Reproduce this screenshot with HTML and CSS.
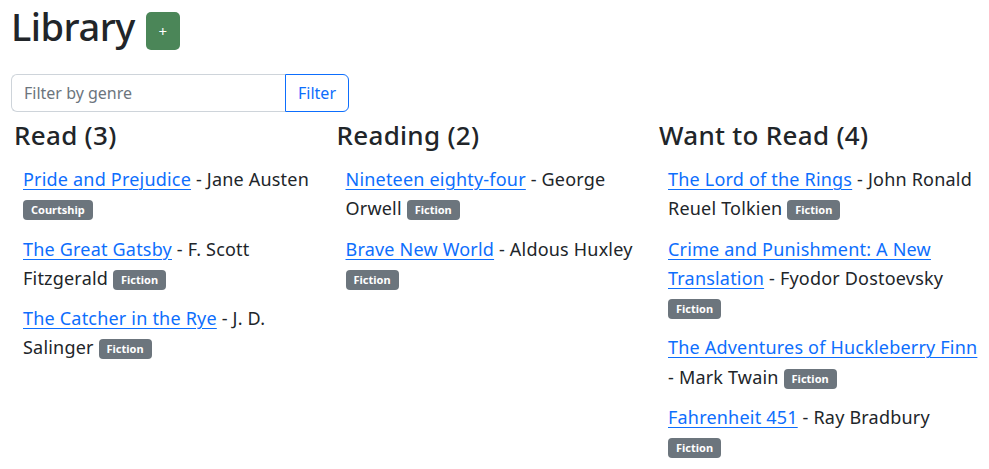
FILE: index.html
```html
<!DOCTYPE html>
<html lang="en">
<head>
<meta charset="utf-8">
<title>Library</title>
<link rel="stylesheet" href="styles.css">
</head>
<body>
<div class="page">
  <header class="header">
    <h1 class="title">Library</h1>
    <button class="btn-add" type="button">+</button>
  </header>
  <form class="filter">
    <input class="filter-input" type="text" placeholder="Filter by genre">
    <button class="filter-btn" type="button">Filter</button>
  </form>
  <div class="shelves">
    <section class="shelf">
      <h2 class="shelf-title">Read (3)</h2>
      <ul class="books">
        <li class="book"><a href="#">Pride and Prejudice</a> - Jane Austen <span class="badge">Courtship</span></li>
        <li class="book"><a href="#">The Great Gatsby</a> - F. Scott Fitzgerald <span class="badge">Fiction</span></li>
        <li class="book"><a href="#">The Catcher in the Rye</a> - J. D. Salinger <span class="badge">Fiction</span></li>
      </ul>
    </section>
    <section class="shelf">
      <h2 class="shelf-title">Reading (2)</h2>
      <ul class="books">
        <li class="book"><a href="#">Nineteen eighty-four</a> - George Orwell <span class="badge">Fiction</span></li>
        <li class="book"><a href="#">Brave New World</a> - Aldous Huxley <span class="badge">Fiction</span></li>
      </ul>
    </section>
    <section class="shelf">
      <h2 class="shelf-title">Want to Read (4)</h2>
      <ul class="books">
        <li class="book"><a href="#">The Lord of the Rings</a> - John Ronald Reuel Tolkien <span class="badge">Fiction</span></li>
        <li class="book"><a href="#">Crime and Punishment: A New Translation</a> - Fyodor Dostoevsky <span class="badge">Fiction</span></li>
        <li class="book"><a href="#">The Adventures of Huckleberry Finn</a> - Mark Twain <span class="badge">Fiction</span></li>
        <li class="book"><a href="#">Fahrenheit 451</a> - Ray Bradbury <span class="badge">Fiction</span></li>
      </ul>
    </section>
  </div>
</div>
</body>
</html>
```
FILE: styles.css
```css
* { box-sizing: border-box; }
html, body { margin: 0; padding: 0; background: #fff; }
body {
  font-family: "Noto Sans", "Open Sans", sans-serif;
  font-size: 18px;
  line-height: 29.3px;
  color: #212529;
  letter-spacing: 0.2px;
}
.page { padding: 0 6px 0 11px; }
.header {
  display: flex;
  align-items: flex-end;
  gap: 11px;
  padding-top: 2px;
}
.title {
  margin: 0;
  font-size: 38px;
  line-height: 48px;
  font-weight: 500;
  letter-spacing: -0.5px;
}
.btn-add {
  width: 34px;
  height: 38px;
  background: #4b8658;
  color: #fff;
  border: none;
  border-radius: 5px;
  font-family: "Noto Sans", sans-serif;
  font-size: 15px;
  padding: 0;
}
.filter {
  display: flex;
  margin-top: 24px;
}
.filter-input {
  width: 274px;
  height: 38px;
  border: 1px solid #ced4da;
  border-right: none;
  border-radius: 6px 0 0 6px;
  padding: 6px 12px;
  font-family: "Noto Sans", sans-serif;
  font-size: 16px;
  color: #212529;
  outline: none;
}
.filter-input::placeholder { color: #6c757d; }
.filter-btn {
  width: 64px;
  height: 38px;
  border: 1px solid #0d6efd;
  border-radius: 0 6px 6px 0;
  background: #fff;
  color: #0d6efd;
  font-family: "Noto Sans", sans-serif;
  font-size: 16px;
  padding: 0;
}
.shelves {
  display: grid;
  grid-template-columns: 322.5px 322.5px 1fr;
  margin-top: 8px;
}
.shelf-title {
  margin: 0 0 14px;
  padding-left: 3px;
  font-size: 26px;
  line-height: 31px;
  font-weight: 500;
  letter-spacing: 0.3px;
}
.books {
  list-style: none;
  margin: 0;
  padding: 0 0 0 12px;
}
.book { margin-bottom: 11px; }
.book a { color: #0d6efd; text-decoration: underline; text-underline-offset: 3px; text-decoration-thickness: 1px; }
.badge {
  display: inline-block;
  background: #6c757d;
  color: #fff;
  font-size: 11px;
  font-weight: 700;
  line-height: 1;
  padding: 4px 8px 5px;
  border-radius: 4px;
  letter-spacing: 0;
  vertical-align: 1px;
}
```
